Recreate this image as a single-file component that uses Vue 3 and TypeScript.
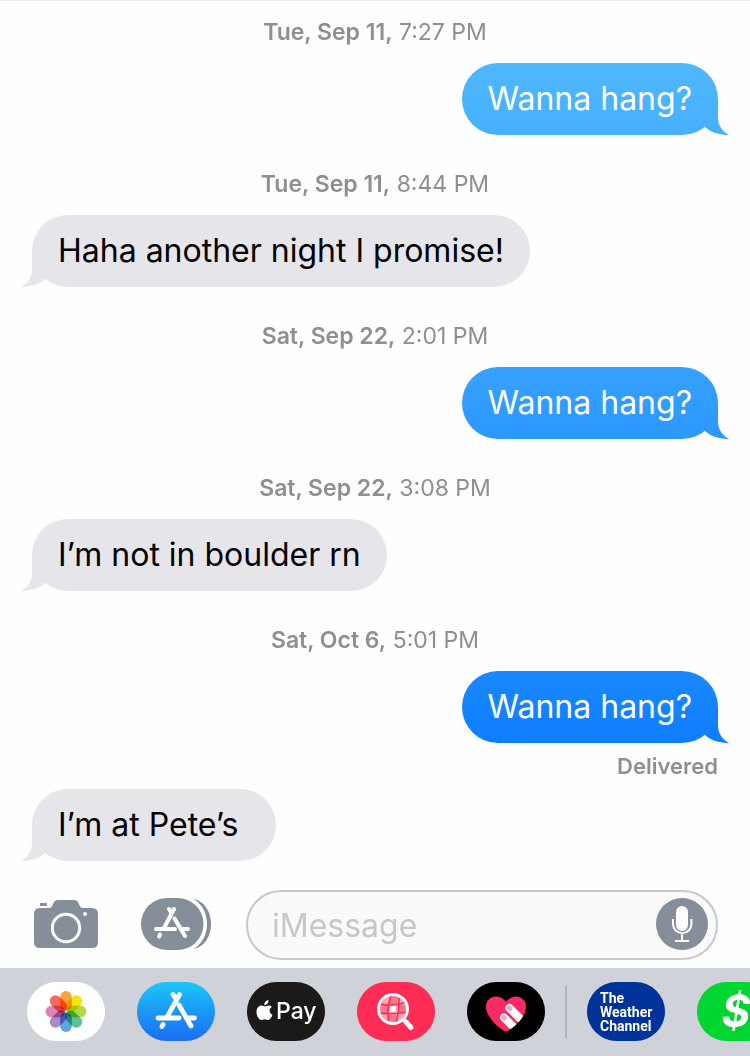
<script setup lang="ts">
import { ref } from 'vue'

interface Entry {
  id: number
  day: string
  time: string
  text: string
  mine: boolean
  tone?: string
  status?: string
}

const entries: Entry[] = [
  { id: 1, day: 'Tue, Sep 11,', time: '7:27 PM', text: 'Wanna hang?', mine: true, tone: 'sky' },
  { id: 2, day: 'Tue, Sep 11,', time: '8:44 PM', text: 'Haha another night I promise!', mine: false },
  { id: 3, day: 'Sat, Sep 22,', time: '2:01 PM', text: 'Wanna hang?', mine: true, tone: 'azure' },
  { id: 4, day: 'Sat, Sep 22,', time: '3:08 PM', text: 'I’m not in boulder rn', mine: false },
  { id: 5, day: 'Sat, Oct 6,', time: '5:01 PM', text: 'Wanna hang?', mine: true, tone: 'blue', status: 'Delivered' },
  { id: 6, day: '', time: '', text: 'I’m at Pete’s', mine: false, tone: 'roomy' }
]

const petals: string[] = ['#fba338', '#f4e60c', '#b0d94c', '#5cc490', '#5ba6e6', '#a98bc8', '#dc86b4', '#fa6a5c']

const draft = ref('')
</script>

<template>
  <div class="screen">
    <main class="thread">
      <template v-for="entry in entries" :key="entry.id">
        <p v-if="entry.day" class="stamp"><strong>{{ entry.day }}</strong> {{ entry.time }}</p>
        <div class="bubble" :class="[entry.mine ? 'mine' : 'theirs', entry.tone]">
          {{ entry.text }}
          <span class="tail" aria-hidden="true"></span>
        </div>
        <p v-if="entry.status" class="status">{{ entry.status }}</p>
      </template>
    </main>

    <form class="composer" @submit.prevent>
      <button type="button" class="tool" aria-label="Camera">
        <svg width="64" height="48" viewBox="0 0 64 48">
          <path fill="#868e99" d="M6 3.500Q6 3 6.500 3H12.500Q13 3 13 3.500V6H6ZM6 8H15Q17.500 8 18.500 5.500L19.500 3Q20.800 0 24 0H40Q43.200 0 44.500 3L45.500 5.500Q46.500 8 49 8H58Q64 8 64 14V42Q64 48 58 48H6Q0 48 0 42V14Q0 8 6 8Z" />
          <circle cx="32" cy="28" r="13.700" fill="none" stroke="#fff" stroke-width="3" />
          <circle cx="51" cy="14" r="2" fill="#fff" />
        </svg>
      </button>
      <button type="button" class="tool apps" aria-label="Apps">
        <svg width="70" height="52" viewBox="0 0 70 52">
          <rect width="62.500" height="52" rx="26" fill="#868e99" />
          <path fill="#868e99" d="M52.500 1C63 3 70 13 70 26S63 49 52.500 51C61 46 66 37 66 26S61 6 52.500 1Z" />
          <g fill="none" stroke="#fff" stroke-width="4" stroke-linecap="round">
            <path d="M33 11L22.500 31M28 11L30.500 15M33.500 20.500L44 38M15 31H34M41.500 31H47M19 36.500L18 38.500" />
          </g>
        </svg>
      </button>
      <div class="field">
        <input v-model="draft" type="text" placeholder="iMessage" aria-label="iMessage" />
        <button type="button" class="mic" aria-label="Dictate">
          <svg width="52" height="52" viewBox="0 0 52 52">
            <circle cx="26" cy="26" r="26" fill="#868e99" />
            <rect x="20" y="8" width="12" height="25" rx="6" fill="#fff" />
            <path d="M17 21V26A9.200 9.200 0 0 0 35.400 26V21M26 35V43M19 43H33" fill="none" stroke="#fff" stroke-width="2" />
          </svg>
        </button>
      </div>
    </form>

    <nav class="dock" aria-label="App drawer">
      <button type="button" class="app photos" aria-label="Photos">
        <svg width="78" height="59" viewBox="0 0 78 59">
          <g class="flower">
            <rect v-for="(color, i) in petals" :key="color" x="33.200" y="9" width="11.600" height="19.500" rx="5.800" :fill="color" :transform="`rotate(${i * 45} 39 29.5)`" />
          </g>
        </svg>
      </button>
      <button type="button" class="app store" aria-label="App Store">
        <svg width="78" height="59" viewBox="0 0 78 59">
          <g fill="none" stroke="#fff" stroke-width="4.800" stroke-linecap="round">
            <path d="M42.500 12.500L29.500 36M36 12.500L39 17M42 23L54 44M21 36H42M50.500 36H57.500M26 42.500L25 44.500" />
          </g>
        </svg>
      </button>
      <button type="button" class="app pay" aria-label="Apple Pay">
        <svg width="78" height="59" viewBox="0 0 78 59">
          <path fill="#fff" d="M21.500 18C21.700 20.800 19.800 23 17.300 23.200C17 20.700 19.200 18.300 21.500 18ZM24.700 25C21.500 27 22 31.200 25.500 32.800C24.500 35.500 22.900 38 21.100 38C19.700 38 19.300 37.200 17.600 37.200S15.400 38 14.100 38C11.700 38 9.500 33.300 9.500 29.900C9.500 26.100 11.900 23.600 14.500 23.600C16 23.600 16.800 24.500 18 24.500C19.200 24.500 20 23.600 21.800 23.600C23 23.600 24 24.100 24.700 25Z" />
          <text x="29" y="37" class="pay-word">Pay</text>
        </svg>
      </button>
      <button type="button" class="app images" aria-label="Images">
        <svg width="78" height="59" viewBox="0 0 78 59">
          <defs>
            <clipPath id="lens"><circle cx="36" cy="27" r="13" /></clipPath>
          </defs>
          <g clip-path="url(#lens)">
            <rect x="22" y="13" width="28" height="28" fill="#ffa3b5" />
            <path d="M32 14L40 13L40 22L33 22ZM22 23L31 24L31 31L22 31ZM41 24L50 22L50 30L41 31ZM32 33L39 33L39 41L32 41Z" fill="#ff7590" />
            <path d="M33.500 24L39 23.500L38.500 29.500L32.500 30Z" fill="#fff" />
            <path d="M34.500 13C31 21 30 31 32 41M41.500 13C42.500 22 42 32 38.500 41M22 22C31 24 42 23 50 20M22 31C31 32 42 32 50 30" fill="none" stroke="#ff2d55" stroke-width="1.700" />
          </g>
          <circle cx="36" cy="27" r="14.500" fill="none" stroke="#fff" stroke-width="3" />
          <path d="M46.500 37.500L49 40" stroke="#fff" stroke-width="3" />
          <path d="M49 40L54 45.500" stroke="#fff" stroke-width="5" stroke-linecap="round" />
        </svg>
      </button>
      <button type="button" class="app touch" aria-label="Digital Touch">
        <svg width="78" height="59" viewBox="0 0 78 59">
          <defs>
            <clipPath id="heart">
              <path d="M39 49.500C36.500 49.500 19 37 19 25C19 18 24 14.500 29 14.500C33.500 14.500 37 17 39 20C41 17 44.500 14.500 49 14.500C54 14.500 59 18 59 25C59 37 41.500 49.500 39 49.500Z" />
            </clipPath>
          </defs>
          <g clip-path="url(#heart)">
            <rect x="18" y="14" width="42" height="36" fill="#ff2a63" />
            <g fill="#fff">
              <rect x="38.500" y="22" width="30" height="8" rx="4" transform="rotate(45 42.500 26)" />
              <rect x="33" y="31.500" width="30" height="8" rx="4" transform="rotate(45 37 35.500)" />
            </g>
            <g fill="#ff9dba">
              <rect x="39.800" y="23.800" width="5.500" height="4.500" rx="2" transform="rotate(45 42.500 26)" />
              <rect x="34.300" y="33.300" width="5.500" height="4.500" rx="2" transform="rotate(45 37 35.500)" />
            </g>
          </g>
        </svg>
      </button>
      <span class="divider" aria-hidden="true"></span>
      <button type="button" class="app weather">The<br />Weather<br />Channel</button>
      <button type="button" class="app cash" aria-label="Cash">$</button>
    </nav>
  </div>
</template>

<style>
body {
  margin: 0;
  background: #fefefe;
}
</style>

<style scoped>
.screen {
  box-sizing: border-box;
  display: flex;
  flex-direction: column;
  min-height: 100vh;
  overflow: hidden;
  border-top: 1px solid #efeff0;
  background: #fefefe;
  font-family: Inter, "Liberation Sans", sans-serif;
}

button {
  padding: 0;
  border: 0;
  background: none;
  font: inherit;
}

svg {
  display: block;
}

.thread {
  display: flex;
  flex: 1;
  flex-direction: column;
  padding: 17px 32px 0;
}

.stamp {
  margin: 0 0 17px;
  color: #8e8e93;
  font-size: 23px;
  line-height: 28px;
  text-align: center;
}

.stamp strong {
  font-weight: 600;
}

.bubble {
  position: relative;
  padding: 15px 26px;
  border-radius: 36px;
  font-size: 32px;
  line-height: 42px;
}

.bubble + .stamp {
  margin-top: 35px;
}

.mine {
  align-self: flex-end;
  color: #fff;
}

.theirs {
  align-self: flex-start;
  background: #e5e5ea;
  color: #000;
}

.roomy {
  padding-right: 38px;
}

.tail {
  position: absolute;
  right: -11px;
  bottom: 0;
  width: 31px;
  height: 72px;
  background: inherit;
  clip-path: path("M0 36H20V54C20 62 24 68 31 72C23 72 13 70 7 64Z");
}

.theirs .tail {
  right: auto;
  left: -11px;
  transform: scaleX(-1);
}

.sky {
  background: linear-gradient(#4eb7fe, #46b0fd);
}

.azure {
  background: linear-gradient(#36a1ff, #2c98ff);
}

.blue {
  background: linear-gradient(#1a88ff, #0d7eff);
}

.status {
  align-self: flex-end;
  margin: 9px 0;
  color: #8e8e93;
  font-size: 22px;
  font-weight: 600;
  line-height: 28px;
}

.composer {
  display: flex;
  align-items: center;
  padding: 29px 32px 8px 34px;
}

.tool {
  flex: none;
  margin-bottom: 2px;
}

.apps {
  margin-right: 35px;
  margin-left: 43px;
}

.field {
  box-sizing: border-box;
  display: flex;
  flex: 1;
  align-items: center;
  min-width: 0;
  height: 70px;
  padding: 0 8px 2px 24px;
  border: 2px solid #c7c7cc;
  border-radius: 35px;
  background: #fafafa;
}

.field input {
  flex: 1;
  min-width: 0;
  padding: 4px 0 0;
  border: 0;
  outline: 0;
  background: none;
  color: #000;
  font: 400 32px/42px Inter, "Liberation Sans", sans-serif;
}

.field input::placeholder {
  color: #c7c7cb;
  opacity: 1;
}

.mic {
  flex: none;
}

.dock {
  display: flex;
  gap: 32px;
  align-items: flex-start;
  padding: 14px 0 15px 27px;
  overflow: hidden;
  background: #d0d2d9;
}

.app {
  flex: none;
  width: 78px;
  height: 59px;
  overflow: hidden;
  border-radius: 30px;
}

.photos {
  background: #fff;
}

.flower {
  isolation: isolate;
}

.flower rect {
  mix-blend-mode: multiply;
}

.store {
  background: linear-gradient(#1bc5f9, #1c6cf3);
}

.pay {
  background: #1b1a19;
}

.pay-word {
  fill: #fff;
  font-size: 23px;
  font-weight: 500;
}

.images {
  background: #ff2d55;
}

.touch {
  background: #000;
}

.divider {
  flex: none;
  width: 2px;
  height: 52px;
  margin: 4px -12px 0;
  background: #b2b4ba;
}

.weather {
  padding-left: 13px;
  background: #003399;
  color: #fff;
  font-family: Roboto, sans-serif;
  font-size: 14px;
  font-weight: 700;
  line-height: 14px;
  text-align: left;
}

.cash {
  background: #00d632;
  color: #fff;
  font-size: 44px;
  font-style: italic;
  font-weight: 700;
  line-height: 59px;
}
</style>
